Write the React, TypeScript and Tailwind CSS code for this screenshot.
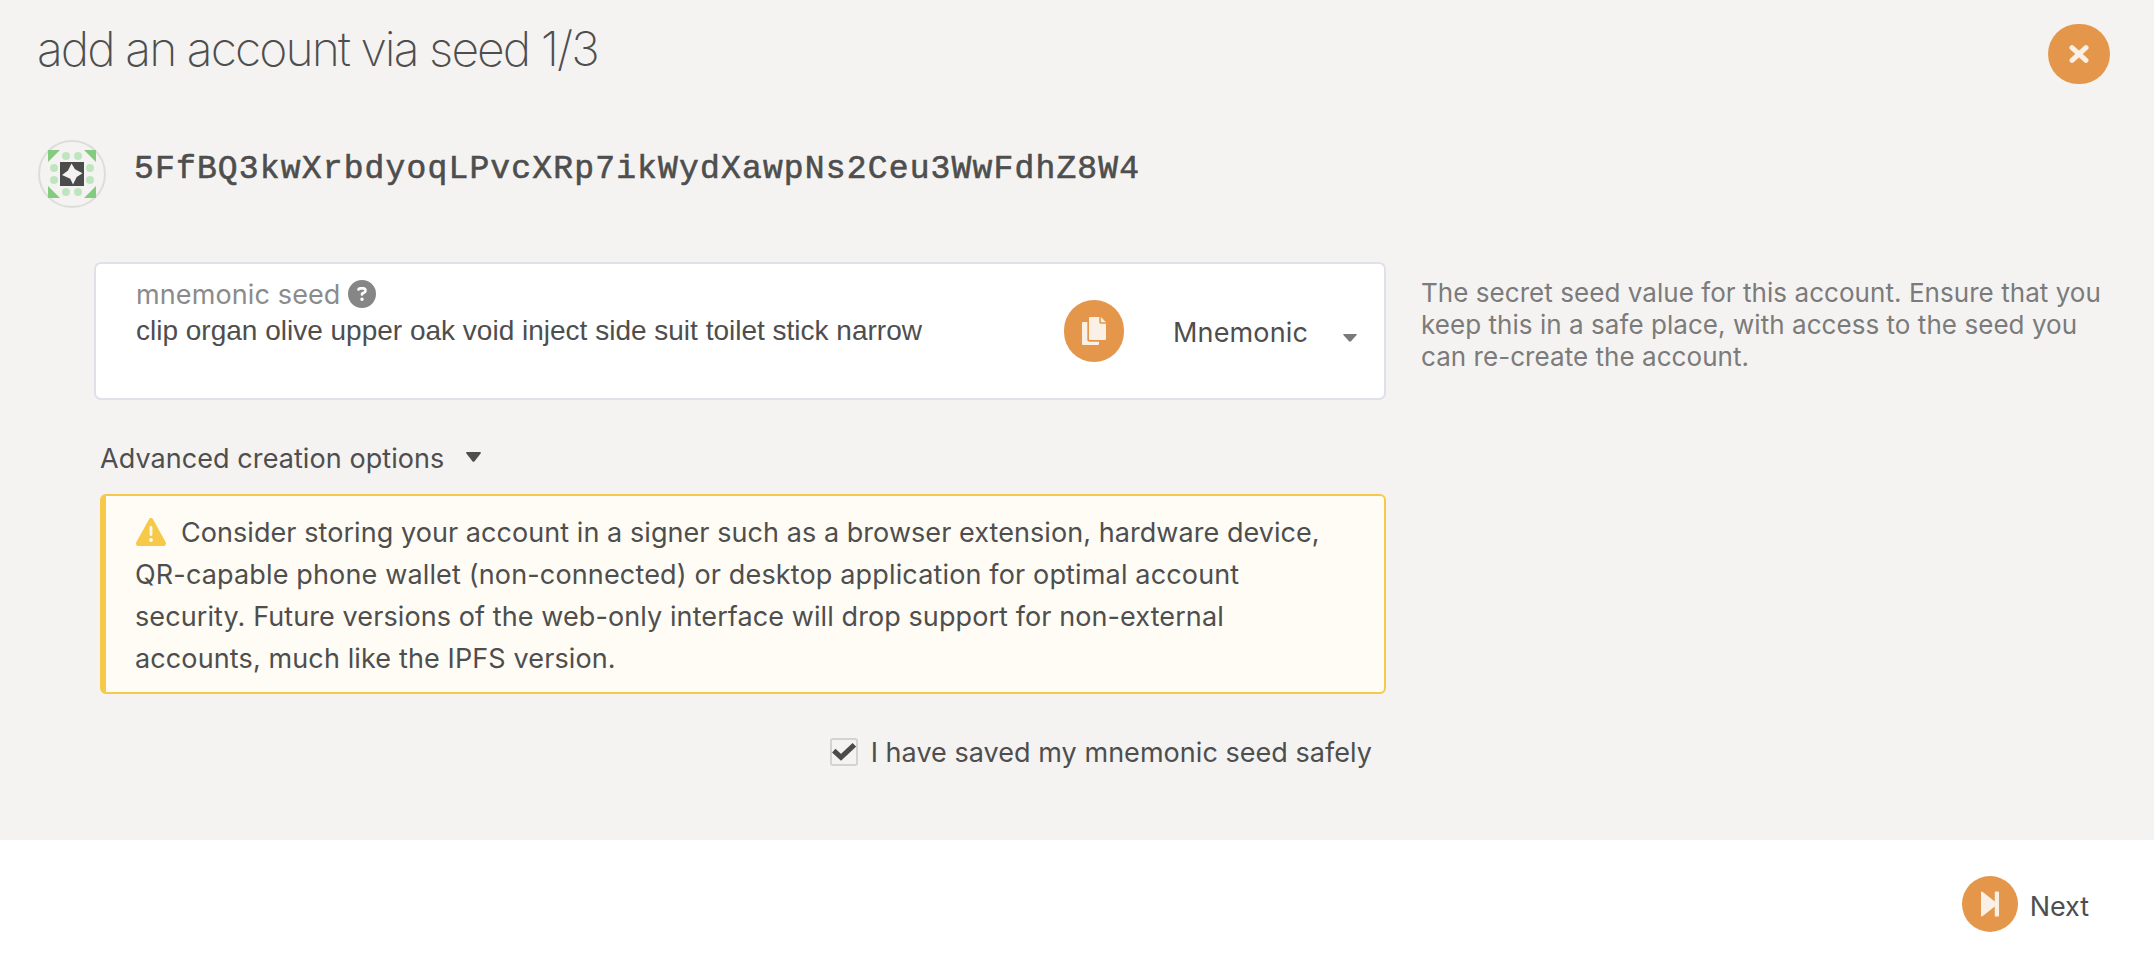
import React from "react";
import { FaCircleQuestion, FaTriangleExclamation } from "react-icons/fa6";

const DOTS: [number, number][] = [
  [18, 6], [30, 6], [6, 18], [42, 18], [6, 30], [42, 30], [18, 42], [30, 42],
];

function Identicon() {
  return (
    <svg width="68" height="68" viewBox="0 0 68 68" className="shrink-0">
      <circle cx="34" cy="34" r="33" fill="none" stroke="#dddddc" strokeWidth="2" />
      <g transform="translate(10 10)">
        <g fill="#82cb7f">
          <path d="M0 0H12L0 12Z" />
          <path d="M36 0H48V12Z" />
          <path d="M48 36V48H36Z" />
          <path d="M0 36L12 48H0Z" />
        </g>
        <g fill="#bfe5bf">
          {DOTS.map(([x, y]) => (
            <circle key={`${x}-${y}`} cx={x} cy={y} r="4" />
          ))}
        </g>
        <rect x="12" y="12" width="24" height="24" fill="#4b4b4b" />
        <path d="M23.5 13.5L27 19.3L34.5 23.3L28.7 27L25 34.5L22.3 28.7L14 25L20 20.5Z" fill="#f4f3f1" />
      </g>
    </svg>
  );
}

function CloseIcon() {
  return (
    <svg width="20" height="20" viewBox="0 0 20 20" fill="none" stroke="#fbf0e6" strokeWidth="5" strokeLinecap="round">
      <path d="M3 3.6L17 16.4M17 3.6L3 16.4" />
    </svg>
  );
}

function CopyIcon() {
  return (
    <svg width="24" height="28" viewBox="0 0 24 28" fill="#fbf0e6">
      <path d="M8 0H17.3V5.2Q17.3 6.7 18.8 6.7H24V22Q24 23 23 23H8Q7 23 7 22V1Q7 0 8 0Z" />
      <path d="M18.9 0L24 5.2H18.9Z" />
      <path d="M0 6Q0 5 1 5H5.3V22.7Q5.3 24.7 7.3 24.7H17V27Q17 28 16 28H1Q0 28 0 27Z" />
    </svg>
  );
}

function StepForwardIcon() {
  return (
    <svg width="18" height="26" viewBox="0 0 18 26" fill="#fbf0e6">
      <path d="M0 1.6Q0.2 0 1.8 0.9L13.8 10.6V1.6Q13.8 0.4 15 0.4H16.8Q18 0.4 18 1.6V24.4Q18 25.6 16.8 25.6H15Q13.8 25.6 13.8 24.4V15.4L1.8 25.1Q0.2 26 0 24.4Z" />
    </svg>
  );
}

function Caret({ className }: { className: string }) {
  return (
    <svg viewBox="0 0 15 10" preserveAspectRatio="none" className={className} fill="currentColor">
      <path d="M1 0H14Q15.4 0.2 14.6 1.4L8.6 9.2Q7.5 10.4 6.4 9.2L0.4 1.4Q-0.4 0.2 1 0Z" />
    </svg>
  );
}

export default function App() {
  return (
    <div className="flex h-[964px] w-[2154px] flex-col overflow-hidden bg-white font-[Inter,sans-serif] text-[27px] leading-8 text-[#4e4e4e]">
      <main className="flex h-[840px] flex-col bg-[#f4f3f1]">
        <header className="flex h-[84px] items-start justify-between pr-11 pl-[37px]">
          <h1 className="mt-5 text-[48px] leading-[57px] font-extralight tracking-[-1.95px] whitespace-nowrap">
            add an account via seed 1/3
          </h1>
          <button aria-label="Close" className="mt-6 flex h-[60px] w-[62px] items-center justify-center rounded-full bg-[#e4974b]">
            <CloseIcon />
          </button>
        </header>

        <section className="mt-14 flex h-[68px] pl-[38px]">
          <Identicon />
          <div className="mt-[5px] ml-7 font-['Liberation_Mono',monospace] text-[33px] leading-[50px] font-normal tracking-[1.16px] whitespace-nowrap [-webkit-text-stroke:0.6px_#4e4e4e]">
            5FfBQ3kwXrbdyoqLPvcXRp7ikWydXawpNs2Ceu3WwFdhZ8W4
          </div>
        </section>

        <section className="mt-[54px] flex pl-[94px]">
          <div className="flex h-[138px] w-[1292px] rounded-[7px] border-2 border-[#dfe0ea] bg-white pl-[39px]">
            <div className="flex w-[929px] flex-col pt-[15px]">
              <label className="flex h-8 items-center pl-px text-[#8b8b8b]">
                <span className="tracking-[0.12px] whitespace-nowrap">mnemonic seed</span>
                <FaCircleQuestion className="-mt-0.5 ml-[7px] size-7 text-[#868686]" />
              </label>
              <div className="mt-[3px] pl-px font-['Liberation_Sans',sans-serif] text-[28px] leading-[34px] whitespace-nowrap">
                clip organ olive upper oak void inject side suit toilet stick narrow
              </div>
            </div>
            <button aria-label="Copy" className="mt-9 flex h-[62px] w-[60px] items-center justify-center rounded-full bg-[#e4974b]">
              <CopyIcon />
            </button>
            <div className="mt-[53px] ml-[49px] w-[170px] tracking-[0.15px]">Mnemonic</div>
            <Caret className="mt-[70px] h-2 w-3.5 text-[#7a7a7a]" />
          </div>
          <p className="mt-[15px] ml-[35px] text-[26px] leading-8 tracking-[0.05px] whitespace-nowrap text-[#7b7b7b]">
            The secret seed value for this account. Ensure that you
            <br />
            keep this in a safe place, with access to the seed you
            <br />
            can re-create the account.
          </p>
        </section>

        <section className="flex w-[1386px] flex-col pl-[100px]">
          <div className="mt-[43px] flex h-8 items-center">
            <span className="tracking-[0.07px] whitespace-nowrap">Advanced creation options</span>
            <Caret className="-mt-1 ml-[22px] h-2.5 w-[15px]" />
          </div>
          <div className="mt-[19px] h-[200px] rounded-[6px] border-2 border-l-[6px] border-[#f7c948] bg-[#fffcf5] pt-4 pl-[29px] leading-[42px] whitespace-nowrap">
            <div className="flex items-center tracking-[0.06px]">
              <FaTriangleExclamation preserveAspectRatio="none" className="-mt-0.5 mr-[15px] ml-px h-8 w-[30px] text-[#f7c948]" />
              Consider storing your account in a signer such as a browser extension, hardware device,
            </div>
            <div className="tracking-[0.15px]">QR-capable phone wallet (non-connected) or desktop application for optimal account</div>
            <div className="tracking-[0.09px]">security. Future versions of the web-only interface will drop support for non-external</div>
            <div className="tracking-[0.12px]">accounts, much like the IPFS version.</div>
          </div>
          <div className="mt-[43px] flex justify-end pr-3.5">
            <span className="mt-px flex h-7 w-7 items-center justify-center rounded-[3px] border-2 border-[#d3d3d2]">
              <svg width="24" height="18" viewBox="0 0 24 18" fill="none" stroke="#4b4b4b" strokeWidth="5" className="shrink-0">
                <path d="M1.8 7.6L9 14.4L22.3 1.8" />
              </svg>
            </span>
            <span className="ml-[13px] tracking-[0.04px] whitespace-nowrap">I have saved my mnemonic seed safely</span>
          </div>
        </section>
      </main>

      <footer className="flex flex-1 justify-end pt-9 pr-[65px]">
        <button className="flex items-start">
          <span className="flex size-14 items-center justify-center rounded-full bg-[#e4974b]">
            <StepForwardIcon />
          </span>
          <span className="mt-[15px] ml-3 tracking-[-0.08px]">Next</span>
        </button>
      </footer>
    </div>
  );
}
